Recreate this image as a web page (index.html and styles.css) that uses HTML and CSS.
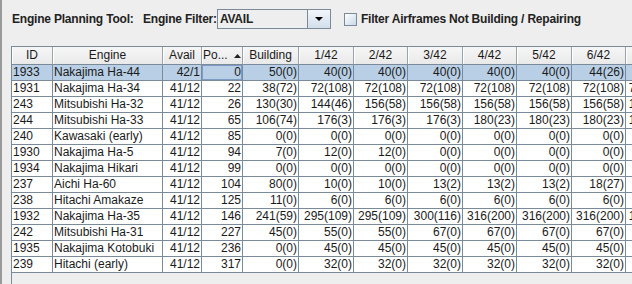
FILE: index.html
```html
<!DOCTYPE html>
<html>
<head>
<meta charset="utf-8">
<link rel="stylesheet" href="styles.css">
</head>
<body>
<div class="frame">
  <div class="toolbar">
    <span class="lbl lbl-tool">Engine Planning Tool:</span>
    <span class="lbl lbl-filter">Engine Filter:</span>
    <div class="combo">
      <span class="combo-value">AVAIL</span>
      <span class="combo-btn"><svg width="8" height="4" viewBox="0 0 8 4"><polygon points="0,0 8,0 4,4" fill="#000"/></svg></span>
    </div>
    <label class="check"><span class="box"></span><span class="lbl">Filter Airframes Not Building / Repairing</span></label>
  </div>
  <div class="scroll">
    <div class="row head">
      <div class="c">ID</div><div class="c">Engine</div><div class="c">Avail</div>
      <div class="c sort"><span>Po...</span><svg width="7" height="4" viewBox="0 0 7 4"><polygon points="0,4 7,4 3.5,0" fill="#222"/></svg></div>
      <div class="c">Building</div><div class="c">1/42</div><div class="c">2/42</div><div class="c">3/42</div><div class="c">4/42</div><div class="c">5/42</div><div class="c">6/42</div><div class="c">7/42</div>
    </div>
    <div class="row sel"><div class="c l">1933</div><div class="c l">Nakajima Ha-44</div><div class="c">42/1</div><div class="c focus">0</div><div class="c">50(0)</div><div class="c">40(0)</div><div class="c">40(0)</div><div class="c">40(0)</div><div class="c">40(0)</div><div class="c">40(0)</div><div class="c">44(26)</div><div class="c"></div></div>
    <div class="row"><div class="c l">1931</div><div class="c l">Nakajima Ha-34</div><div class="c">41/12</div><div class="c">22</div><div class="c">38(72)</div><div class="c">72(108)</div><div class="c">72(108)</div><div class="c">72(108)</div><div class="c">72(108)</div><div class="c">72(108)</div><div class="c">72(108)</div><div class="c">72(108)</div></div>
    <div class="row"><div class="c l">243</div><div class="c l">Mitsubishi Ha-32</div><div class="c">41/12</div><div class="c">26</div><div class="c">130(30)</div><div class="c">144(46)</div><div class="c">156(58)</div><div class="c">156(58)</div><div class="c">156(58)</div><div class="c">156(58)</div><div class="c">156(58)</div><div class="c">156(58)</div></div>
    <div class="row"><div class="c l">244</div><div class="c l">Mitsubishi Ha-33</div><div class="c">41/12</div><div class="c">65</div><div class="c">106(74)</div><div class="c">176(3)</div><div class="c">176(3)</div><div class="c">176(3)</div><div class="c">180(23)</div><div class="c">180(23)</div><div class="c">180(23)</div><div class="c">180(23)</div></div>
    <div class="row"><div class="c l">240</div><div class="c l">Kawasaki (early)</div><div class="c">41/12</div><div class="c">85</div><div class="c">0(0)</div><div class="c">0(0)</div><div class="c">0(0)</div><div class="c">0(0)</div><div class="c">0(0)</div><div class="c">0(0)</div><div class="c">0(0)</div><div class="c">0(0)</div></div>
    <div class="row"><div class="c l">1930</div><div class="c l">Nakajima Ha-5</div><div class="c">41/12</div><div class="c">94</div><div class="c">7(0)</div><div class="c">12(0)</div><div class="c">12(0)</div><div class="c">0(0)</div><div class="c">0(0)</div><div class="c">0(0)</div><div class="c">0(0)</div><div class="c">0(0)</div></div>
    <div class="row"><div class="c l">1934</div><div class="c l">Nakajima Hikari</div><div class="c">41/12</div><div class="c">99</div><div class="c">0(0)</div><div class="c">0(0)</div><div class="c">0(0)</div><div class="c">0(0)</div><div class="c">0(0)</div><div class="c">0(0)</div><div class="c">0(0)</div><div class="c">0(0)</div></div>
    <div class="row"><div class="c l">237</div><div class="c l">Aichi Ha-60</div><div class="c">41/12</div><div class="c">104</div><div class="c">80(0)</div><div class="c">10(0)</div><div class="c">10(0)</div><div class="c">13(2)</div><div class="c">13(2)</div><div class="c">13(2)</div><div class="c">18(27)</div><div class="c">18(27)</div></div>
    <div class="row"><div class="c l">238</div><div class="c l">Hitachi Amakaze</div><div class="c">41/12</div><div class="c">125</div><div class="c">11(0)</div><div class="c">6(0)</div><div class="c">6(0)</div><div class="c">6(0)</div><div class="c">6(0)</div><div class="c">6(0)</div><div class="c">6(0)</div><div class="c">6(0)</div></div>
    <div class="row"><div class="c l">1932</div><div class="c l">Nakajima Ha-35</div><div class="c">41/12</div><div class="c">146</div><div class="c">241(59)</div><div class="c">295(109)</div><div class="c">295(109)</div><div class="c">300(116)</div><div class="c">316(200)</div><div class="c">316(200)</div><div class="c">316(200)</div><div class="c">16(200)</div></div>
    <div class="row"><div class="c l">242</div><div class="c l">Mitsubishi Ha-31</div><div class="c">41/12</div><div class="c">227</div><div class="c">45(0)</div><div class="c">55(0)</div><div class="c">55(0)</div><div class="c">67(0)</div><div class="c">67(0)</div><div class="c">67(0)</div><div class="c">67(0)</div><div class="c">67(0)</div></div>
    <div class="row"><div class="c l">1935</div><div class="c l">Nakajima Kotobuki</div><div class="c">41/12</div><div class="c">236</div><div class="c">0(0)</div><div class="c">45(0)</div><div class="c">45(0)</div><div class="c">45(0)</div><div class="c">45(0)</div><div class="c">45(0)</div><div class="c">45(0)</div><div class="c">45(0)</div></div>
    <div class="row"><div class="c l">239</div><div class="c l">Hitachi (early)</div><div class="c">41/12</div><div class="c">317</div><div class="c">0(0)</div><div class="c">32(0)</div><div class="c">32(0)</div><div class="c">32(0)</div><div class="c">32(0)</div><div class="c">32(0)</div><div class="c">32(0)</div><div class="c">32(0)</div></div>
  </div>
</div>
</body>
</html>
```

FILE: styles.css
```css
html, body {
  margin: 0;
  padding: 0;
  width: 632px;
  height: 284px;
  overflow: hidden;
  background: #eeeeee;
}
.frame {
  height: 284px;
  border-left: 2px solid #9a9a9a;
  font-family: "Liberation Sans", Arial, sans-serif;
  font-size: 12px;
  color: #111;
}
.toolbar {
  display: flex;
  align-items: center;
  height: 20px;
  padding: 9px 0 17px 10px;
}
.lbl {
  font-weight: bold;
  color: #222;
  white-space: nowrap;
  letter-spacing: -0.2px;
}
.lbl-tool { width: 131px; flex: none; }
.lbl-filter { flex: none; }
.combo {
  display: flex;
  flex: none;
  width: 114px;
  height: 20px;
  box-sizing: border-box;
  border: 1px solid #7a8a99;
  background: #eeeeee;
}
.combo-value {
  flex: 1;
  font-weight: bold;
  color: #222;
  padding-left: 2px;
  line-height: 18px;
  letter-spacing: -0.2px;
}
.combo-btn {
  width: 22px;
  display: flex;
  align-items: center;
  justify-content: center;
  border-left: 1px solid #7a8a99;
  background: linear-gradient(#f2f6fa, #d2dfec);
}
.check {
  display: flex;
  align-items: center;
  margin-left: 13px;
}
.box {
  width: 13px;
  height: 13px;
  box-sizing: border-box;
  border: 1px solid #7a8a99;
  background: linear-gradient(135deg, #ffffff, #c9d8e8);
  margin-right: 4px;
}
.scroll {
  margin-left: 9px;
  border-top: 1px solid #7a8a99;
  border-left: 1px solid #7a8a99;
  height: 300px;
}
.row {
  display: grid;
  grid-template-columns: 41px 110px 39px 41px 56px 55px 54px 55px 54px 55px 54px 46px;
  height: 16px;
  background: #ffffff;
}
.c {
  box-sizing: border-box;
  border-right: 1px solid #7a8a99;
  border-bottom: 1px solid #7a8a99;
  padding: 0 1px;
  line-height: 15px;
  text-align: right;
  white-space: nowrap;
  overflow: hidden;
  color: #1a1a1a;
}
.c.l { text-align: left; padding-left: 1px; }
.row.head {
  height: 18px;
  background: #eeeeee;
}
.row.head .c {
  text-align: center;
  line-height: 17px;
  border-right: 1px solid #9aa3ab;
  border-bottom: 1px solid #7a8a99;
  box-shadow: inset 1px 0 #ffffff;
  background: linear-gradient(#f6f6f6, #e9e9e9);
}
.row.head .c.sort {
  display: flex;
  align-items: center;
  text-align: left;
  padding-left: 1px;
}
.sort svg { margin-left: 6px; }
.row.sel { background: #b8cfe5; }
.c.focus { box-shadow: inset 0 0 0 1px #7e9bc4; }
```
